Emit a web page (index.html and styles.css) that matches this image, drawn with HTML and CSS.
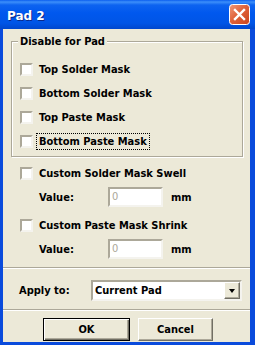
FILE: index.html
```html
<!DOCTYPE html>
<html lang="en">
<head>
  <meta charset="UTF-8" />
  <title>Pad 2</title>
  <link rel="stylesheet" href="styles.css">
</head>
<body>

  <div class="window">
    <div class="titlebar">
      <span class="title">Pad 2</span>
      <span class="close">
        <svg width="21" height="21" viewBox="0 0 21 21">
          <defs>
            <linearGradient id="closeGrad" x1="0" y1="0" x2="1" y2="1">
              <stop offset="0" stop-color="#F09A7C"/>
              <stop offset="0.45" stop-color="#E0633B"/>
              <stop offset="1" stop-color="#C9431C"/>
            </linearGradient>
          </defs>
          <rect x="0.5" y="0.5" width="20" height="20" rx="3" fill="url(#closeGrad)" stroke="#fff"/>
          <path d="M6 6 L15 15 M15 6 L6 15" stroke="#fff" stroke-width="2.4" stroke-linecap="square"/>
        </svg>
      </span>
    </div>

    <div class="client">
      <fieldset class="group">
        <legend>Disable for Pad</legend>
        <div class="row"><span class="check"></span><span>Top Solder Mask</span></div>
        <div class="row"><span class="check"></span><span>Bottom Solder Mask</span></div>
        <div class="row"><span class="check"></span><span>Top Paste Mask</span></div>
        <div class="row"><span class="check"></span><span class="focus">Bottom Paste Mask</span></div>
      </fieldset>

      <div class="option">
        <div class="row"><span class="check"></span><span>Custom Solder Mask Swell</span></div>
        <div class="row value">
          <span class="value-label">Value:</span>
          <span class="field">0</span>
          <span class="unit">mm</span>
        </div>
      </div>

      <div class="option">
        <div class="row"><span class="check"></span><span>Custom Paste Mask Shrink</span></div>
        <div class="row value">
          <span class="value-label">Value:</span>
          <span class="field">0</span>
          <span class="unit">mm</span>
        </div>
      </div>

      <div class="sep sep-top"></div>

      <div class="apply">
        <span class="apply-label">Apply to:</span>
        <div class="combo">
          <span class="combo-text">Current Pad</span>
          <span class="combo-btn"><span class="arrow"></span></span>
        </div>
      </div>

      <div class="sep sep-bottom"></div>

      <div class="buttons">
        <button class="btn btn-default">OK</button>
        <button class="btn">Cancel</button>
      </div>
    </div>
  </div>

</body>
</html>
```

FILE: styles.css
```css
body {
  margin: 0;
  font-family: "DejaVu Sans Condensed", "DejaVu Sans", sans-serif;
  font-size: 11px;
  font-weight: bold;
  color: #000;
}
.window {
  width: 255px;
  height: 345px;
  display: flex;
  flex-direction: column;
  background: #0A4BDC;
}
.titlebar {
  height: 29px;
  flex: none;
  display: flex;
  align-items: center;
  justify-content: space-between;
  padding: 0 5px 0 7px;
  background: linear-gradient(#0B5EEF 0, #3C8FFA 2px, #0D63F0 5px, #0058EE 45%, #0055E6 80%, #0047CD 100%);
}
.title {
  color: #fff;
  font-family: "DejaVu Sans", sans-serif;
  font-size: 12px;
  padding-top: 2px;
  text-shadow: 1px 1px 0 #0B2A8A;
}
.close {
  display: flex;
  width: 21px;
  height: 21px;
}
.client {
  flex: 1;
  margin: 0 5px 3px 3px;
  background: #ECE9D8;
  display: flex;
  flex-direction: column;
}

/* group box */
.group {
  margin: 6px 7px 0 8px;
  padding: 9px 0 3px 0;
  border: 1px solid #ACA899;
  box-shadow: 1px 1px 0 #fff, inset 1px 1px 0 #fff;
  min-width: 0;
}
.group legend {
  margin-left: 6px;
  padding: 0 2px;
  line-height: 13px;
  background: #ECE9D8;
}
.row {
  height: 24px;
  display: flex;
  align-items: center;
}
.group .row {
  padding-left: 8px;
}
.check {
  width: 13px;
  height: 13px;
  box-sizing: border-box;
  flex: none;
  margin-right: 6px;
  background: #fff;
  border: 2px solid;
  border-color: #ACA899 #F4F3EE #F4F3EE #ACA899;
}
.focus {
  outline: 1px dotted #000;
  outline-offset: 1px;
  padding: 0 1px;
  margin-left: -1px;
}

/* custom value options */
.option {
  margin-top: 4px;
  padding-left: 17px;
}
.value {
  padding-left: 19px;
}
.value-label {
  width: 69px;
}
.field {
  width: 55px;
  height: 20px;
  box-sizing: border-box;
  background: #fff;
  border: 2px solid;
  border-color: #ACA899 #F4F3EE #F4F3EE #ACA899;
  color: #ACA899;
  font-weight: normal;
  padding-left: 2px;
  line-height: 16px;
}
.unit {
  margin-left: 8px;
}

.sep {
  height: 0;
  border-top: 1px solid #ACA899;
  border-bottom: 1px solid #fff;
}
.sep-top {
  margin-top: 6px;
}
.sep-bottom {
  margin-top: 8px;
}

/* apply to */
.apply {
  margin-top: 11px;
  height: 21px;
  display: flex;
  align-items: center;
  padding-left: 16px;
}
.apply-label {
  width: 72px;
}
.combo {
  width: 151px;
  height: 21px;
  box-sizing: border-box;
  display: flex;
  align-items: center;
  justify-content: space-between;
  background: #fff;
  border: 2px solid;
  border-color: #ACA899 #F4F3EE #F4F3EE #ACA899;
}
.combo-text {
  padding-left: 2px;
}
.combo-btn {
  width: 16px;
  height: 17px;
  box-sizing: border-box;
  display: flex;
  align-items: center;
  justify-content: center;
  background: #ECE9D8;
  border: 1px solid;
  border-color: #fff #716F64 #716F64 #fff;
  box-shadow: inset -1px -1px 0 #ACA899;
}
.arrow {
  width: 0;
  height: 0;
  border-left: 3.5px solid transparent;
  border-right: 3.5px solid transparent;
  border-top: 4px solid #000;
}

/* buttons */
.buttons {
  margin-top: 7px;
  display: flex;
  gap: 8px;
  padding-left: 40px;
}
.btn {
  width: 75px;
  height: 23px;
  padding: 0;
  font: inherit;
  color: #000;
  background: #ECE9D8;
  border: 1px solid;
  border-color: #fff #716F64 #716F64 #fff;
  box-shadow: inset -1px -1px 0 #ACA899;
}
.btn-default {
  width: 87px;
  border-color: #000;
  box-shadow: inset 1px 1px 0 #fff, inset -1px -1px 0 #716F64, inset -2px -2px 0 #ACA899;
}
```
